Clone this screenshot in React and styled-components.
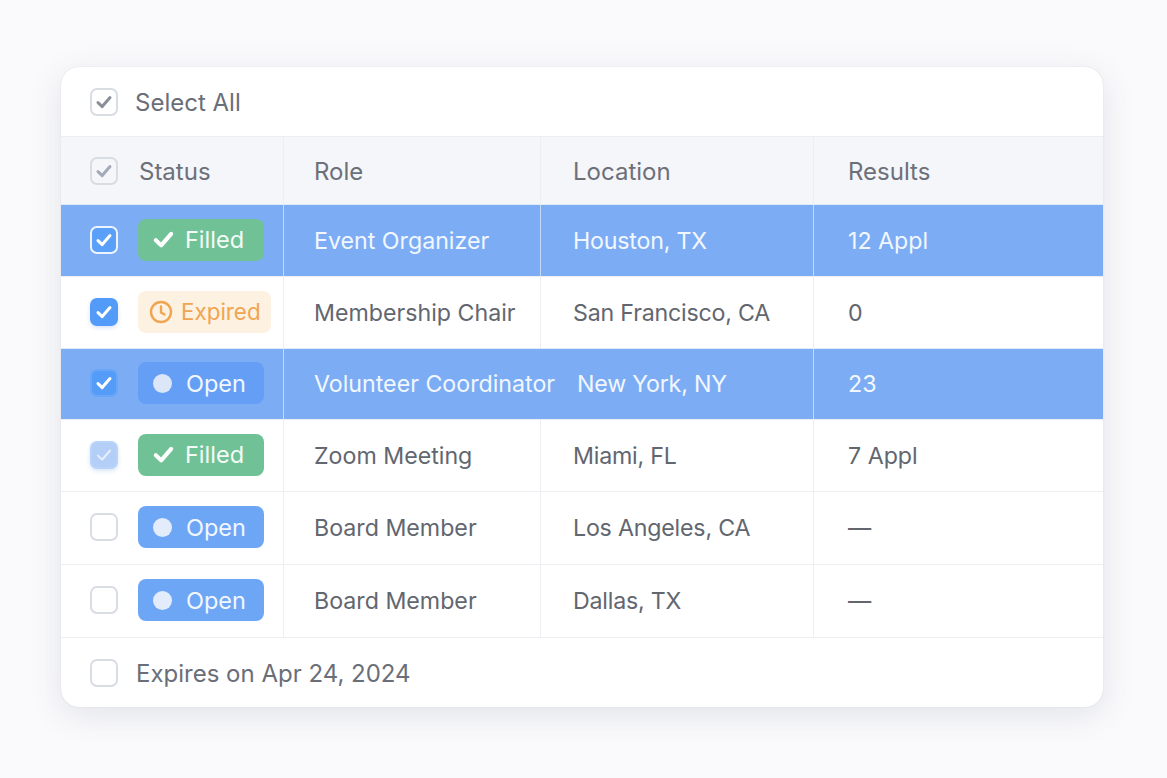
import React from 'react';
import styled, { createGlobalStyle } from 'styled-components';

const GlobalStyle = createGlobalStyle`
    html, body {
        margin: 0;
        height: 100%;
        background: #fafafc;
        font-family: Inter, "Noto Sans", sans-serif;
    }
`;

const Page = styled.div`
    width: 1167px;
    height: 778px;
    padding: 67px 64px 71px 61px;
    box-sizing: border-box;
`;

const Card = styled.div`
    height: 640px;
    background: #fff;
    border-radius: 18px;
    overflow: hidden;
    display: flex;
    flex-direction: column;
    box-shadow: 0 0 1px rgba(60, 70, 90, 0.25), 0 8px 32px rgba(70, 80, 110, 0.13);
`;

const Bar = styled.div`
    height: ${(p) => p.$height}px;
    flex: none;
    display: flex;
    align-items: center;
    gap: ${(p) => p.$gap}px;
    padding-left: 29px;
    font-size: 24px;
    color: #6a6e78;
    box-sizing: border-box;
    border-top: ${(p) => (p.$line ? '1px solid #eceef1' : 'none')};
`;

const Label = styled.span`
    padding-top: 2px;
`;

const Row = styled.div`
    height: ${(p) => p.$height}px;
    flex: none;
    display: grid;
    grid-template-columns: 222px 257px 273px 1fr;
    box-sizing: border-box;
    border-top: 1px solid ${(p) => (p.$selected ? '#dfe9f8' : '#eceef1')};
    background: ${(p) => (p.$head ? '#f5f6f9' : p.$selected ? '#7cadf4' : '#fff')};
    color: ${(p) => (p.$head ? '#6c7079' : p.$selected ? '#f2f7ff' : '#62666f')};
    font-size: ${(p) => (p.$head ? 24 : 23.2)}px;
`;

const Cell = styled.div`
    display: flex;
    align-items: center;
    min-width: 0;
    white-space: nowrap;
    padding-left: ${(p) => p.$indent || 30}px;
    padding-top: ${(p) => (p.$head ? 2 : 0)}px;
    letter-spacing: ${(p) => (p.$tight ? '-0.2px' : 'normal')};
    border-left: 1px solid ${(p) => (p.$noLine ? 'transparent' : p.$selected ? '#c5d9f8' : '#eceef1')};
`;

const StatusCell = styled.div`
    display: flex;
    align-items: center;
    gap: ${(p) => p.$gap || 20}px;
    padding-left: 29px;
    padding-bottom: ${(p) => (p.$head ? 0 : 2)}px;
`;

const Box = styled.span`
    width: 28px;
    height: 28px;
    flex: none;
    box-sizing: border-box;
    display: flex;
    align-items: center;
    justify-content: center;
    border-radius: 7px;
    border: 2px solid ${(p) => p.$border || '#d8dce3'};
    background: ${(p) => p.$fill || '#fff'};
    box-shadow: ${(p) => (p.$raised ? '0 2px 4px rgba(80, 130, 220, 0.22)' : 'none')};
`;

const Badge = styled.span`
    height: 42px;
    width: ${(p) => p.$width || 126}px;
    flex: none;
    box-sizing: border-box;
    display: flex;
    align-items: center;
    gap: ${(p) => p.$gap || 10}px;
    padding-left: ${(p) => p.$pad || 14}px;
    border-radius: 8px;
    background: ${(p) => p.$bg};
    color: ${(p) => p.$color};
    font-size: ${(p) => p.$size || 23.5}px;
`;

const Dot = styled.span`
    width: 19px;
    height: 19px;
    margin-right: 2px;
    border-radius: 50%;
    background: ${(p) => p.$color || '#dfe9fa'};
`;

const Check = ({ color = '#fff', size = 18, width = 3 }) => (
    <svg width={size} height={size} viewBox="0 0 18 18" fill="none">
        <path d="M3 9.6 7.2 13.6 15 4.6" stroke={color} strokeWidth={width} strokeLinecap="round" strokeLinejoin="round" />
    </svg>
);

const Clock = () => (
    <svg width="24" height="24" viewBox="0 0 24 24" fill="none" stroke="#f0a552" strokeWidth="2.4" strokeLinecap="round" strokeLinejoin="round">
        <circle cx="12" cy="12" r="10" />
        <path d="M12 6.5V12.5L15.5 14.5" />
    </svg>
);

const StatusBadge = ({ status, muted }) => {
    if (status === 'Filled') {
        return (
            <Badge $bg="#70c296" $color="#f4fbf7">
                <Check size={23} width={3.2} />
                Filled
            </Badge>
        );
    }
    if (status === 'Expired') {
        return (
            <Badge $bg="#fdf1e2" $color="#f0a552" $width={133} $gap={8} $pad={11} $size={22.4}>
                <Clock />
                Expired
            </Badge>
        );
    }
    return (
        <Badge $bg={muted ? '#659ff5' : '#6ea6f6'} $color="#f2f7ff" $pad={15} $gap={12}>
            <Dot $color={muted ? '#dbe6f8' : '#e3ecfb'} />
            Open
        </Badge>
    );
};

const rows = [
    { height: 72, status: 'Filled', role: 'Event Organizer', location: 'Houston, TX', results: '12 Appl', selected: true, box: 'outlined' },
    { height: 72, status: 'Expired', role: 'Membership Chair', location: 'San Francisco, CA', results: '0', box: 'checked' },
    { height: 71, status: 'Open', role: 'Volunteer Coordinator', location: 'New York, NY', results: '23', selected: true, box: 'soft', overflow: true },
    { height: 72, status: 'Filled', role: 'Zoom Meeting', location: 'Miami, FL', results: '7 Appl', box: 'faded' },
    { height: 73, status: 'Open', role: 'Board Member', location: 'Los Angeles, CA', results: '—' },
    { height: 73, status: 'Open', role: 'Board Member', location: 'Dallas, TX', results: '—' },
];

const RowBox = ({ type }) => {
    if (type === 'outlined') return <Box $fill="#5a9ff8" $border="#eef4fe"><Check /></Box>;
    if (type === 'checked') return <Box $fill="#539bf8" $border="#539bf8" $raised><Check /></Box>;
    if (type === 'soft') return <Box $fill="#559cf8" $border="#6aa6f8"><Check /></Box>;
    if (type === 'faded') return <Box $fill="#b3cff8" $border="#b9d3f9" $raised><Check color="#e8f0fd" width={2} /></Box>;
    return <Box />;
};

const App = () => (
    <Page>
        <GlobalStyle />
        <Card>
            <Bar $height={69} $gap={17}>
                <Box><Check color="#8a8f99" /></Box>
                <Label>Select All</Label>
            </Bar>
            <Row $head $height={68}>
                <StatusCell $head $gap={21}>
                    <Box $fill="#f5f6f9"><Check color="#a2aab8" /></Box>
                    <Label>Status</Label>
                </StatusCell>
                <Cell $head>Role</Cell>
                <Cell $head $indent={32}>Location</Cell>
                <Cell $head $indent={34}>Results</Cell>
            </Row>
            {rows.map((row, i) => (
                <Row key={i} $height={row.height} $selected={row.selected}>
                    <StatusCell>
                        <RowBox type={row.box} />
                        <StatusBadge status={row.status} muted={row.selected} />
                    </StatusCell>
                    <Cell $selected={row.selected}>{row.role}</Cell>
                    <Cell $selected={row.selected} $noLine={row.overflow} $tight $indent={row.overflow ? 36 : 32}>{row.location}</Cell>
                    <Cell $selected={row.selected} $indent={34}>{row.results}</Cell>
                </Row>
            ))}
            <Bar $line $height={70} $gap={18}>
                <Box />
                <Label>Expires on Apr 24, 2024</Label>
            </Bar>
        </Card>
    </Page>
);

export default App;
